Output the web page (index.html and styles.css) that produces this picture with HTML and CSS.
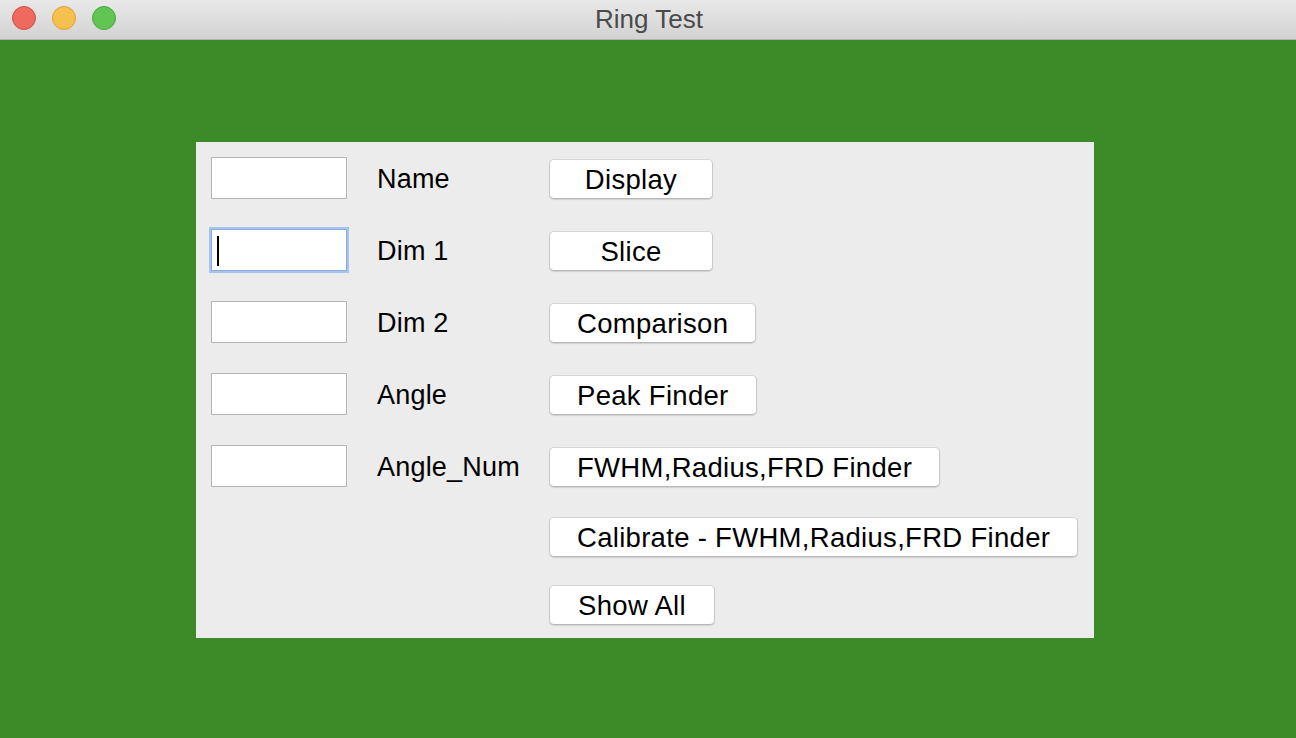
FILE: index.html
```html
<!DOCTYPE html>
<html>
<head>
<meta charset="utf-8">
<title>Ring Test</title>
<link rel="stylesheet" href="styles.css">
</head>
<body>
<div class="window">
  <div class="titlebar">
    <div class="lights">
      <span class="light red"></span>
      <span class="light yellow"></span>
      <span class="light green"></span>
    </div>
    <div class="title">Ring Test</div>
  </div>
  <div class="content">
    <div class="panel">
      <div class="entry"></div>
      <div class="label">Name</div>
      <div class="cell"><button class="btn w-min">Display</button></div>

      <div class="entry focused"><span class="caret"></span></div>
      <div class="label">Dim 1</div>
      <div class="cell"><button class="btn w-min">Slice</button></div>

      <div class="entry"></div>
      <div class="label">Dim 2</div>
      <div class="cell"><button class="btn">Comparison</button></div>

      <div class="entry"></div>
      <div class="label">Angle</div>
      <div class="cell"><button class="btn">Peak Finder</button></div>

      <div class="entry"></div>
      <div class="label">Angle_Num</div>
      <div class="cell"><button class="btn">FWHM,Radius,FRD Finder</button></div>

      <div class="spacer"></div>
      <div class="spacer"></div>
      <div class="cell top"><button class="btn">Calibrate - FWHM,Radius,FRD Finder</button></div>

      <div class="spacer"></div>
      <div class="spacer"></div>
      <div class="cell top last"><button class="btn wide">Show All</button></div>
    </div>
  </div>
</div>
</body>
</html>
```

FILE: styles.css
```css
html, body {
  margin: 0;
  padding: 0;
  height: 100%;
}
body {
  font-family: "Liberation Sans", Arial, sans-serif;
  background: #3b8b28;
}
.window {
  display: flex;
  flex-direction: column;
  height: 738px;
}
.titlebar {
  height: 39px;
  flex: 0 0 39px;
  background: linear-gradient(#e9e9e9, #d2d2d2);
  border-bottom: 1px solid #b3b3b3;
  display: flex;
  align-items: center;
  justify-content: center;
  position: relative;
}
.lights {
  position: absolute;
  left: 12px;
  top: 6px;
  display: flex;
  gap: 16px;
}
.light {
  width: 22px;
  height: 22px;
  border-radius: 50%;
  display: block;
}
.red { background: #ee6a5f; border: 1px solid #d25046; }
.yellow { background: #f6c04f; border: 1px solid #d9a33b; }
.green { background: #61c554; border: 1px solid #4aa73e; }
.title {
  font-size: 26px;
  color: #4b4b4b;
  padding-left: 2px;
}
.content {
  flex: 1;
  padding: 102px 0 0 196px;
  background: #3b8b28;
}
.panel {
  width: 898px;
  height: 496px;
  box-sizing: border-box;
  background: #ececec;
  padding: 15px 15px 0 15px;
  display: grid;
  grid-template-columns: 166px 172px auto;
  grid-template-rows: 42px 42px 42px 42px 42px 40px 40px;
  row-gap: 30px;
}
.entry {
  width: 136px;
  height: 42px;
  box-sizing: border-box;
  background: #fff;
  border: 1px solid #b5b5b5;
  position: relative;
}
.entry.focused {
  border: 1px solid #8dabdc;
  box-shadow: 0 0 0 2px #a5c4ef;
}
.caret {
  position: absolute;
  left: 5px;
  top: 6px;
  width: 2px;
  height: 30px;
  background: #000;
}
.label {
  font-size: 27px;
  letter-spacing: 0.2px;
  color: #000;
  display: flex;
  align-items: center;
  height: 42px;
  padding-top: 3px;
  box-sizing: border-box;
}
.cell {
  display: flex;
  align-items: flex-end;
}
.cell.top {
  align-items: flex-start;
}
.cell.last {
  margin-top: -2px;
}
.btn {
  font-family: "Liberation Sans", Arial, sans-serif;
  font-size: 27.5px;
  letter-spacing: 0.3px;
  color: #000;
  height: 40px;
  box-sizing: border-box;
  padding: 2px 27px 0 27px;
  background: #fff;
  border: 1px solid #cacaca;
  border-top-color: #d6d6d6;
  border-bottom-color: #b8b8b8;
  border-radius: 5px;
  box-shadow: 0 1px 1px rgba(0, 0, 0, 0.12);
  line-height: 36px;
  text-align: center;
}
.btn.w-min {
  width: 164px;
}
.btn.wide {
  min-width: 166px;
}
```
